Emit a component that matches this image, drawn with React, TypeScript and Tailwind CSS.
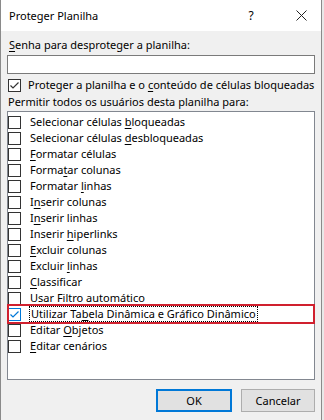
import React from "react";

const FONT = { fontFamily: '"Noto Sans", "Open Sans", Arial, sans-serif' };

type Item = { pre: string; key?: string; post?: string; checked?: boolean; focused?: boolean };

const ITEMS: Item[] = [
  { pre: "Selecionar células ", key: "b", post: "loqueadas" },
  { pre: "Selecionar células ", key: "d", post: "esbloqueadas" },
  { pre: "", key: "F", post: "ormatar células" },
  { pre: "Forma", key: "t", post: "ar colunas" },
  { pre: "Formatar ", key: "l", post: "inhas" },
  { pre: "I", key: "n", post: "serir colunas" },
  { pre: "I", key: "n", post: "serir linhas" },
  { pre: "Inserir ", key: "h", post: "iperlinks" },
  { pre: "", key: "E", post: "xcluir colunas" },
  { pre: "Excluir ", key: "l", post: "inhas" },
  { pre: "", key: "C", post: "lassificar" },
  { pre: "Usar Filtro automático" },
  { pre: "Utilizar Ta", key: "b", post: "ela Dinâmica e Gráfico Dinâmico", checked: true, focused: true },
  { pre: "Editar ", key: "O", post: "bjetos" },
  { pre: "", key: "E", post: "ditar cenários" },
];

function Check({ checked, blue }: { checked?: boolean; blue?: boolean }) {
  return (
    <span
      className={`w-[13px] h-[13px] flex-shrink-0 bg-white border flex items-center justify-center ${
        blue ? "border-[#0078d7]" : "border-[#333333]"
      }`}
    >
      {checked && (
        <svg width="11" height="11" viewBox="0 0 11 11">
          <path
            d="M1.5 5.5 L4 8 L9.5 2.5"
            fill="none"
            stroke={blue ? "#0078d7" : "#333333"}
            strokeWidth="1.2"
          />
        </svg>
      )}
    </span>
  );
}

function Label({ pre, k, post }: { pre: string; k?: string; post?: string }) {
  return (
    <>
      {pre}
      {k && <span className="underline underline-offset-2">{k}</span>}
      {post}
    </>
  );
}

export default function App() {
  return (
    <div className="w-[324px] h-[420px] bg-[#e8e8e8] flex text-black text-[11px] leading-[16px]" style={FONT}>
      <div className="w-[322px] h-full flex flex-col bg-[#f0f0f0] border-x border-[#8a8a8a]">
        {/* Title bar */}
        <div className="h-[31px] bg-white flex items-center flex-shrink-0">
          <span className="pl-[8px] text-[11px]">Proteger Planilha</span>
          <span className="ml-auto w-[14px] text-center text-[12px] mr-[38px]">?</span>
          <svg width="11" height="11" viewBox="0 0 11 11" className="mr-[14px]">
            <path d="M0.5 0.5 L10.5 10.5 M10.5 0.5 L0.5 10.5" stroke="#222" strokeWidth="1" />
          </svg>
        </div>

        <div className="flex flex-col px-[6px] pt-[6px]">
          <div className="pl-[2px] h-[16px]">
            <Label pre="" k="S" post="enha para desproteger a planilha:" />
          </div>
          <div className="mt-[2px] h-[19px] bg-white border border-[#7a7a7a]" />

          <div className="mt-[3px] h-[16px] flex items-center gap-[7px] pl-[1px]">
            <Check checked />
            <span className="whitespace-nowrap">
              <Label pre="Proteger a planilha e o " k="c" post="onteúdo de células bloqueadas" />
            </span>
          </div>
          <div className="mt-[1px] h-[16px] pl-[1px] whitespace-nowrap">Permitir todos os usuários desta planilha para:</div>

          {/* List box */}
          <div className="relative mt-[1px] h-[269px] bg-white border border-[#828790] pt-[2px] flex flex-col">
            {ITEMS.map((it, i) => (
              <div key={i} className="h-[16px] flex items-center gap-[8px]">
                <Check checked={it.checked} blue={it.focused} />
                <span
                  className={`whitespace-nowrap px-[1px] ${
                    it.focused ? "border border-dotted border-black leading-[14px]" : ""
                  }`}
                >
                  <Label pre={it.pre} k={it.key} post={it.post} />
                </span>
              </div>
            ))}
            {/* red annotation box */}
            <div className="absolute left-[-1px] right-[-1px] top-[192px] h-[20px] border-2 border-[#d0202e] pointer-events-none" />
          </div>

          {/* Buttons */}
          <div className="mt-[9px] flex justify-end gap-[9px]">
            <button className="w-[76px] h-[23px] bg-[#e1e1e1] border-2 border-[#0078d7] text-[11px]" style={FONT}>
              OK
            </button>
            <button className="w-[74px] h-[23px] bg-[#e1e1e1] border border-[#adadad] text-[11px]" style={FONT}>
              Cancelar
            </button>
          </div>
        </div>
      </div>
    </div>
  );
}
